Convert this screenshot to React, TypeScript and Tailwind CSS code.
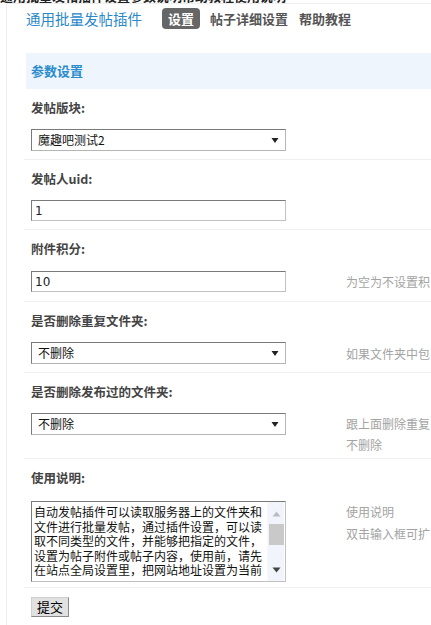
import React from "react";

const CJK = "font-['Microsoft_YaHei','Noto_Sans_CJK_SC',sans-serif]";

function Arrow() {
  return (
    <svg width="8" height="7" viewBox="0 0 8 7" className="shrink-0">
      <path d="M0.5 1 L7.5 1 L4 6 Z" fill="#222" />
    </svg>
  );
}

function Select({ value }: { value: string }) {
  return (
    <div className="w-[255px] h-[22px] shrink-0 flex items-center justify-between border border-t-[#7a7a7a] border-l-[#7a7a7a] border-r-[#b5b5b5] border-b-[#b5b5b5] bg-white pl-[6px] pr-[6px] text-[12px] text-[#111]">
      <span className="leading-[20px]">{value}</span>
      <Arrow />
    </div>
  );
}

function Input({ value }: { value: string }) {
  return (
    <div className="w-[255px] h-[21px] shrink-0 flex items-center border border-t-[#7a7a7a] border-l-[#7a7a7a] border-r-[#c0c0c0] border-b-[#c0c0c0] bg-white pl-[3px] text-[12px] text-[#222] font-['DejaVu_Sans',sans-serif]">
      {value}
    </div>
  );
}

function Label({ children }: { children: React.ReactNode }) {
  return (
    <div className="pt-[10px] pb-[12px] leading-[18px] text-[12.5px] font-bold text-[#444]">
      {children}
    </div>
  );
}

function Hint({ children }: { children: React.ReactNode }) {
  return (
    <div className="ml-[60px] whitespace-nowrap text-[12px] leading-[21px] text-[#a3a3a3]">
      {children}
    </div>
  );
}

export default function App() {
  const text =
    "自动发帖插件可以读取服务器上的文件夹和文件进行批量发帖，通过插件设置，可以读取不同类型的文件，并能够把指定的文件，设置为帖子附件或帖子内容，使用前，请先在站点全局设置里，把网站地址设置为当前域名，然后再进行发帖操作。";
  return (
    <div className={`w-[431px] h-[625px] overflow-hidden bg-white ${CJK}`}>
      <div className="h-[3px] overflow-hidden">
        <div className="mt-[-12px] whitespace-nowrap text-[13px] leading-[15px] font-bold text-[#222]">
          通用批量发帖插件设置参数说明帮助教程使用说明
        </div>
      </div>
      <div className="ml-[6px] border-l border-t border-[#eeeeee] pl-[17px] pt-[4px] w-[600px] min-h-[700px]">
        <div className="flex items-center h-[21px] ml-[2px]">
          <span className="text-[14.5px] text-[#2a88c9] whitespace-nowrap">通用批量发帖插件</span>
          <span className="ml-[20px] h-[21px] px-[6px] rounded-[4px] bg-[#666666] text-white text-[13px] font-bold leading-[21px]">
            设置
          </span>
          <span className="ml-[10px] text-[13px] font-bold text-[#555]">帖子详细设置</span>
          <span className="ml-[11px] text-[13px] font-bold text-[#555]">帮助教程</span>
        </div>

        <div className="mt-[24px] ml-[2px] h-[36px] bg-[#eef5fc] px-[5px] leading-[36px] text-[13px] font-bold text-[#2a8ccd]">
          参数设置
        </div>

        <div className="px-[7px] pb-[8px] border-b border-[#f0f0f0]">
          <Label>发帖版块:</Label>
          <div className="flex items-center">
            <Select value="魔趣吧测试2" />
          </div>
        </div>

        <div className="px-[7px] pb-[8px] border-b border-[#f0f0f0]">
          <Label>发帖人uid:</Label>
          <div className="flex items-center">
            <Input value="1" />
          </div>
        </div>

        <div className="px-[7px] pb-[9px] border-b border-[#f0f0f0]">
          <Label>附件积分:</Label>
          <div className="flex items-center mt-[1px]">
            <Input value="10" />
            <Hint>为空为不设置积</Hint>
          </div>
        </div>

        <div className="px-[7px] pb-[8px] border-b border-[#f0f0f0]">
          <Label>是否删除重复文件夹:</Label>
          <div className="flex items-center">
            <Select value="不删除" />
            <Hint>如果文件夹中包</Hint>
          </div>
        </div>

        <div className="px-[7px] pb-[3px] border-b border-[#f0f0f0]">
          <Label>是否删除发布过的文件夹:</Label>
          <div className="flex items-start">
            <Select value="不删除" />
            <Hint>
              <div>跟上面删除重复</div>
              <div>不删除</div>
            </Hint>
          </div>
        </div>

        <div className="px-[7px] pb-[5px] border-b border-[#f0f0f0]">
          <Label>使用说明:</Label>
          <div className="flex items-start mt-[2px]">
            <div className="w-[255px] h-[81px] shrink-0 flex border border-t-[#7a7a7a] border-l-[#7a7a7a] border-r-[#c0c0c0] border-b-[#c0c0c0] bg-white">
              <div className="w-[235px] h-full pl-[2px] pr-[3px] pt-[3px]">
                <div className="h-[73px] overflow-hidden text-[12px] leading-[14.5px] text-[#111] break-all">
                  {text}
                </div>
              </div>
              <div className="w-[17px] h-full bg-[#f1f5fb] flex flex-col items-center border-l border-[#f6f8fc]">
                <svg width="9" height="6" viewBox="0 0 9 6" className="mt-[9px]">
                  <path d="M0.5 5.5 L8.5 5.5 L4.5 0.5 Z" fill="#b8bcc4" />
                </svg>
                <div className="mt-[7px] w-[15px] h-[21px] bg-[#c9c9c9]" />
                <div className="flex-1" />
                <svg width="9" height="6" viewBox="0 0 9 6" className="mb-[8px]">
                  <path d="M0.5 0.5 L8.5 0.5 L4.5 5.5 Z" fill="#444" />
                </svg>
              </div>
            </div>
            <Hint>
              <div>使用说明</div>
              <div className="mt-[1px]">双击输入框可扩</div>
            </Hint>
          </div>
        </div>

        <div className="flex px-[7px] pt-[9px]">
          <button className="h-[20px] px-[5px] bg-[#e1e1e1] border border-t-[#cfcfcf] border-l-[#cfcfcf] border-r-[#8a8a8a] border-b-[#8a8a8a] text-[13px] leading-[18px] text-black">
            提交
          </button>
        </div>
      </div>
    </div>
  );
}
